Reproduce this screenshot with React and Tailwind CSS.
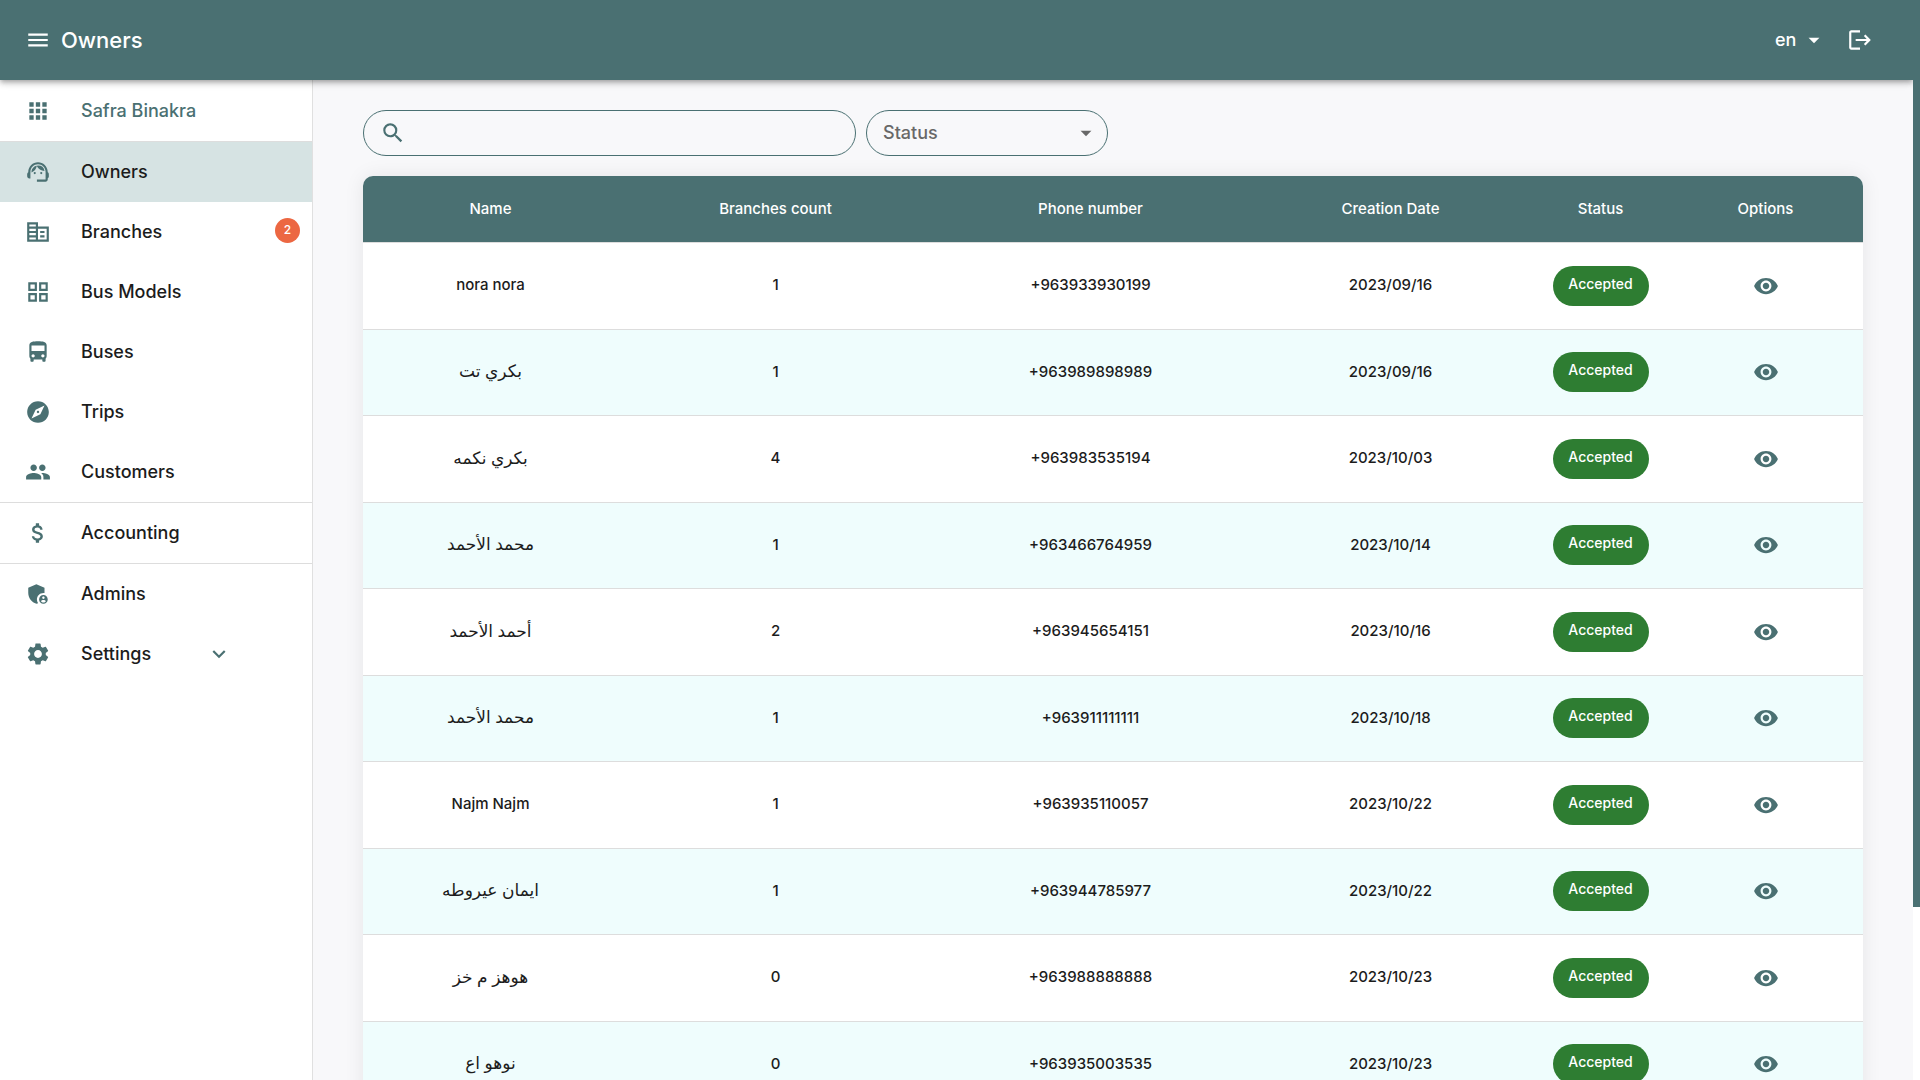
import React from "react";
import {
  MdAdminPanelSettings,
  MdApps,
  MdArrowDropDown,
  MdAttachMoney,
  MdDirectionsBus,
  MdExpandMore,
  MdExplore,
  MdLogout,
  MdMenu,
  MdOutlineCorporateFare,
  MdOutlineGridView,
  MdPeople,
  MdSearch,
  MdSettings,
  MdSupportAgent,
  MdVisibility,
} from "react-icons/md";

const menu = [
  { label: "Safra Binakra", icon: MdApps, brand: true, divider: true },
  { label: "Owners", icon: MdSupportAgent, active: true },
  { label: "Branches", icon: MdOutlineCorporateFare, count: 2 },
  { label: "Bus Models", icon: MdOutlineGridView },
  { label: "Buses", icon: MdDirectionsBus },
  { label: "Trips", icon: MdExplore },
  { label: "Customers", icon: MdPeople, divider: true },
  { label: "Accounting", icon: MdAttachMoney, divider: true },
  { label: "Admins", icon: MdAdminPanelSettings },
  { label: "Settings", icon: MdSettings, expandable: true },
];

const owners = [
  { name: "nora nora", branches: 1, phone: "+963933930199", date: "2023/09/16" },
  { name: "بكري تت", branches: 1, phone: "+963989898989", date: "2023/09/16", arabic: true },
  { name: "بكري نكمه", branches: 4, phone: "+963983535194", date: "2023/10/03", arabic: true },
  { name: "محمد الأحمد", branches: 1, phone: "+963466764959", date: "2023/10/14", arabic: true },
  { name: "أحمد الأحمد", branches: 2, phone: "+963945654151", date: "2023/10/16", arabic: true },
  { name: "محمد الأحمد", branches: 1, phone: "+963911111111", date: "2023/10/18", arabic: true },
  { name: "Najm Najm", branches: 1, phone: "+963935110057", date: "2023/10/22" },
  { name: "ايمان عيروطه", branches: 1, phone: "+963944785977", date: "2023/10/22", arabic: true },
  { name: "هوهز م خز", branches: 0, phone: "+963988888888", date: "2023/10/23", arabic: true },
  { name: "نوهو اع", branches: 0, phone: "+963935003535", date: "2023/10/23", arabic: true },
];

function Header() {
  return (
    <header className="relative z-10 flex h-20 shrink-0 items-center justify-between bg-[#4a7072] pr-10 pl-[25px] text-white shadow-[0px_2px_4px_-1px_rgba(0,0,0,0.2),0px_4px_5px_0px_rgba(0,0,0,0.14),0px_1px_10px_0px_rgba(0,0,0,0.12)]">
      <div className="flex items-center gap-[10px]">
        <button type="button" aria-label="Toggle menu">
          <MdMenu className="size-[26px]" />
        </button>
        <h1 className="text-[22px] font-medium">Owners</h1>
      </div>
      <div className="flex items-center gap-5">
        <div className="relative flex items-center">
          <select
            aria-label="Language"
            className="w-[52px] appearance-none bg-transparent text-lg font-medium outline-none"
          >
            <option>en</option>
          </select>
          <MdArrowDropDown className="pointer-events-none absolute right-0 size-[26px]" />
        </div>
        <button type="button" aria-label="Logout">
          <MdLogout className="size-[26px]" />
        </button>
      </div>
    </header>
  );
}

function Sidebar() {
  return (
    <nav className="w-[313px] shrink-0 border-r border-[#e0e0e0] bg-white pt-px">
      <ul>
        {menu.map((item) => {
          const Icon = item.icon;
          return (
            <li
              key={item.label}
              className={item.divider ? "border-b border-[#dddddd]" : ""}
            >
              <a
                href="#"
                className={`flex h-[60px] items-center pr-3 pl-[25px] text-lg font-medium ${
                  item.active ? "bg-[#d6e3e3]" : ""
                } ${item.brand ? "text-[#4a7072]" : "text-[#1c1c1c]"}`}
              >
                <Icon className="mr-[30px] size-[26px] text-[#4a7072]" />
                <span>{item.label}</span>
                {item.count && (
                  <span className="mb-1 ml-auto flex size-[25px] items-center justify-center rounded-full bg-[#ec6742] text-xs text-white">
                    {item.count}
                  </span>
                )}
                {item.expandable && (
                  <MdExpandMore className="mr-[68px] ml-auto size-[26px] text-[#4a7072]" />
                )}
              </a>
            </li>
          );
        })}
      </ul>
    </nav>
  );
}

function Filters() {
  return (
    <div className="flex gap-[10px]">
      <label className="flex h-[46px] w-[493px] items-center rounded-full border border-[#4a7072] px-4">
        <MdSearch className="size-[26px] text-[#4a7072]" />
        <input type="text" aria-label="Search" className="ml-2 flex-1 outline-none" />
      </label>
      <div className="relative flex h-[46px] w-[242px] items-center rounded-full border border-[#4a7072]">
        <select
          aria-label="Status"
          className="h-full w-full appearance-none bg-transparent px-4 text-lg font-medium text-[#686868] outline-none"
        >
          <option>Status</option>
        </select>
        <MdArrowDropDown className="pointer-events-none absolute right-2 size-[26px] text-[#686868]" />
      </div>
    </div>
  );
}

function OwnersTable() {
  return (
    <div className="mt-5 overflow-hidden rounded-[10px] bg-white shadow-[0px_0px_20px_rgba(0,0,0,0.08)]">
      <table className="w-full table-fixed text-center text-[15px] font-medium text-[#1c1c1c]">
        <thead className="bg-[#4a7072] text-white">
          <tr className="h-[66px] border-b border-[#dddddd]">
            <th className="w-[17%] font-medium">Name</th>
            <th className="w-[21%] font-medium">Branches count</th>
            <th className="w-[21%] font-medium">Phone number</th>
            <th className="w-[19%] font-medium">Creation Date</th>
            <th className="w-[9%] font-medium">Status</th>
            <th className="w-[13%] font-medium">Options</th>
          </tr>
        </thead>
        <tbody>
          {owners.map((owner) => (
            <tr
              key={owner.phone}
              className="h-[87px] border-b border-[#dddddd] bg-white even:h-[86px] even:bg-[#effdfd]"
            >
              <td className={owner.arabic ? "text-[17px]" : ""}>{owner.name}</td>
              <td>{owner.branches}</td>
              <td>{owner.phone}</td>
              <td>{owner.date}</td>
              <td>
                <span className="mx-auto flex h-10 w-24 items-center justify-center rounded-full bg-[#2e7d32] pb-1 text-sm text-white">
                  Accepted
                </span>
              </td>
              <td>
                <button type="button" aria-label="View owner" className="align-middle">
                  <MdVisibility className="size-[26px] text-[#4a7072]" />
                </button>
              </td>
            </tr>
          ))}
        </tbody>
      </table>
    </div>
  );
}

function App() {
  return (
    <div className="flex h-screen overflow-hidden bg-white font-['Inter','DejaVu_Sans',sans-serif]">
      <div className="flex min-w-0 flex-1 flex-col">
        <Header />
        <div className="flex min-h-0 flex-1">
          <Sidebar />
          <main className="min-w-0 flex-1 overflow-hidden bg-[#f8f8fa] px-[50px] pt-[30px]">
            <Filters />
            <OwnersTable />
          </main>
        </div>
      </div>
      {/* scroll rail */}
      <div className="z-20 w-[7px] shrink-0 bg-white">
        <div className="h-[84%] bg-[#4a7072]" />
      </div>
    </div>
  );
}

export default App;
